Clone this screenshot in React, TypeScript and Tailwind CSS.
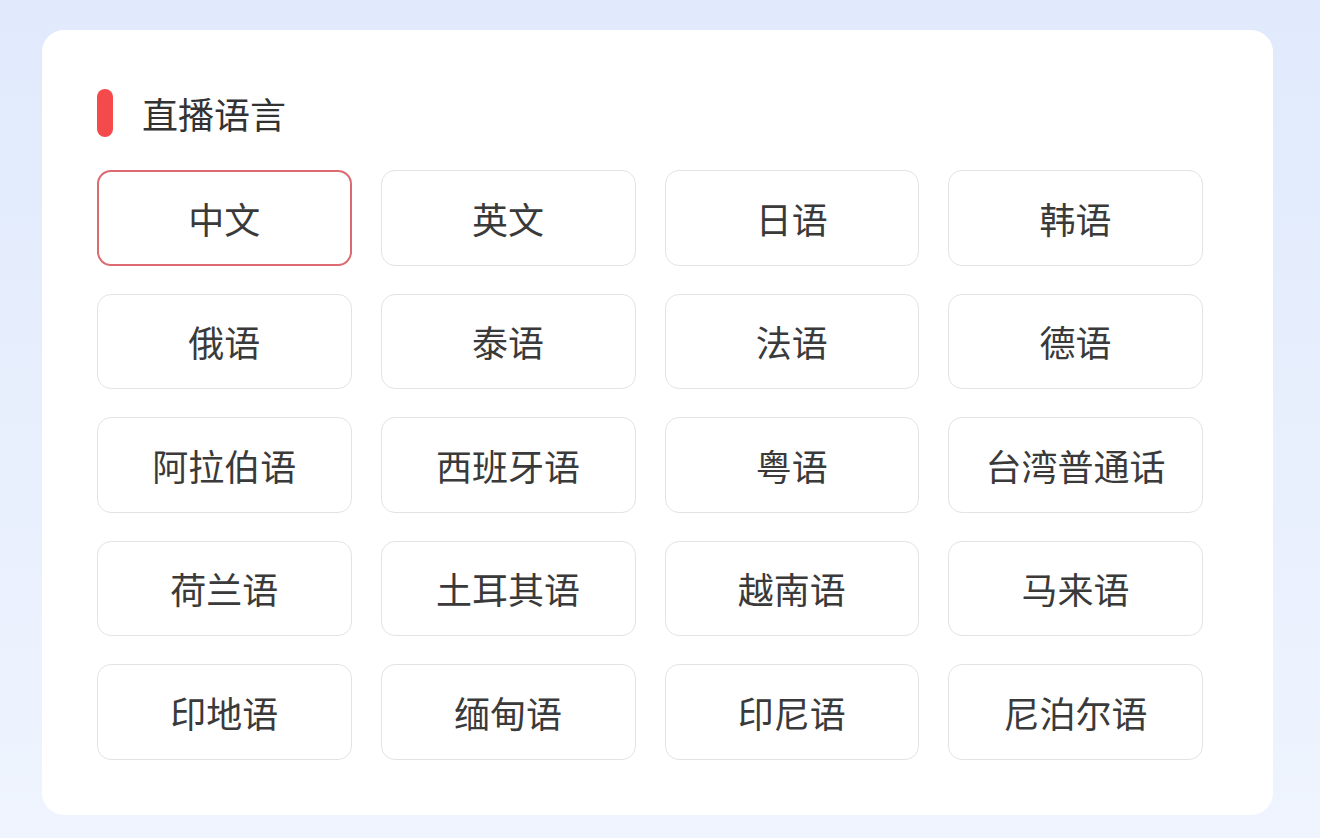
import { useState } from "react";

const languages = [
  "中文", "英文", "日语", "韩语",
  "俄语", "泰语", "法语", "德语",
  "阿拉伯语", "西班牙语", "粤语", "台湾普通话",
  "荷兰语", "土耳其语", "越南语", "马来语",
  "印地语", "缅甸语", "印尼语", "尼泊尔语",
];

export default function App() {
  const [selected, setSelected] = useState("中文");

  return (
    <div
      className="min-h-[838px] w-full bg-gradient-to-b from-[#e0eafc] to-[#eff4fe] px-[42px] pt-[30px] pb-[25px]"
      style={{ fontFamily: '"Noto Sans CJK SC", "Noto Sans", sans-serif' }}
    >
      <div className="w-[1231px] rounded-[22px] bg-white pl-[55px] pr-[70px] pt-[59px] pb-[55px]">
        <div className="flex h-[48px] items-center gap-[29px]">
          <span className="h-[48px] w-[16px] rounded-full bg-[#f44a4c]" />
          <h2 className="text-[36px] leading-none font-normal text-[#333333]">直播语言</h2>
        </div>
        <div className="mt-[33px] grid grid-cols-4 gap-x-[29px] gap-y-[28px]">
          {languages.map((lang) => {
            const active = lang === selected;
            return (
              <button
                key={lang}
                onClick={() => setSelected(lang)}
                className={`flex h-[95.5px] items-center justify-center rounded-[14px] bg-white text-[36px] leading-none text-[#3a3a3a] ${
                  active ? "border-2 border-[#dc6a71]" : "border border-[#e3e3e3]"
                }`}
              >
                {lang}
              </button>
            );
          })}
        </div>
      </div>
    </div>
  );
}
